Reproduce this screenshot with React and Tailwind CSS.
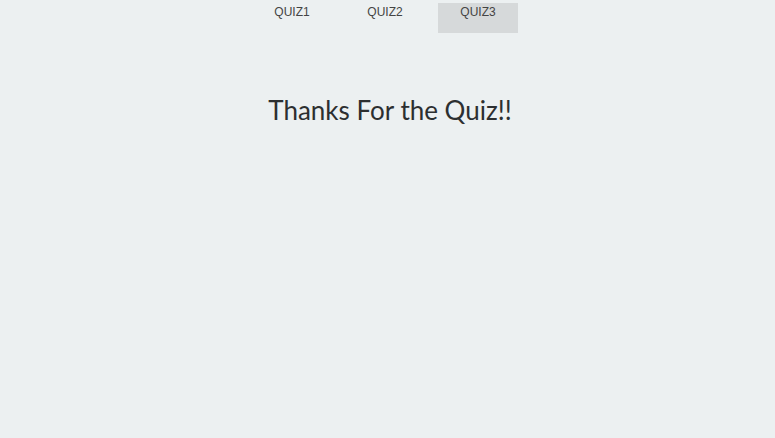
import React, { useState } from 'react';

const tabs = ['QUIZ1', 'QUIZ2', 'QUIZ3'];

export default function App() {
  const [active, setActive] = useState(2);

  return (
    <div className="min-h-[438px] bg-[#ecf0f1] font-['Liberation_Sans',Arial,sans-serif]">
      <nav className="flex justify-center gap-[13px] pt-[3px] pr-[5px]">
        {tabs.map((t, idx) => (
          <button
            key={t}
            onClick={() => setActive(idx)}
            className={`w-[80px] h-[30px] pt-[2px] text-[12px] leading-[14px] text-[#444] flex justify-center items-start ${
              active === idx ? 'bg-[#d6d9da]' : ''
            }`}
          >
            {t}
          </button>
        ))}
      </nav>

      <h1 className="mt-[61px] pl-[5px] text-center font-['Lato',sans-serif] text-[26px] leading-[32px] text-[#2c2f30]">
        Thanks For the Quiz!!
      </h1>
    </div>
  );
}
